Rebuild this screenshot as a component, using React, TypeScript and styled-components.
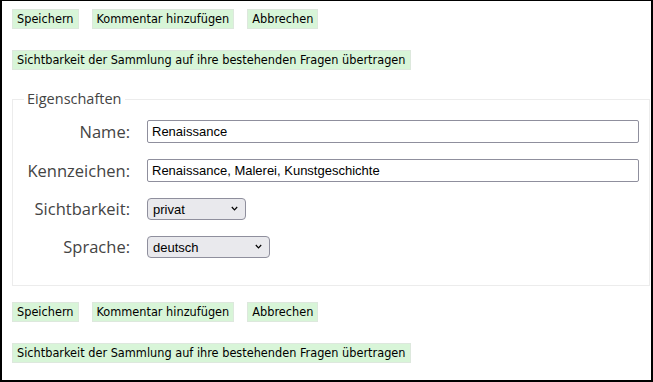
import React from "react";
import styled, { createGlobalStyle } from "styled-components";

const Global = createGlobalStyle`
  html, body { margin: 0; padding: 0; background: #fff; }
  #root { width: 653px; height: 382px; }
`;

const Page = styled.div`
  box-sizing: border-box;
  width: 653px;
  height: 382px;
  border-style: solid;
  border-color: #000;
  border-width: 1px 2px 2px 2px;
  padding: 8px 1px 0 10px;
  display: flex;
  flex-direction: column;
`;

const ButtonRow = styled.div<{ $top?: number }>`
  display: flex;
  gap: 13px;
  margin-top: ${(p) => p.$top ?? 0}px;
`;

const ActionButton = styled.button`
  box-sizing: border-box;
  height: 20px;
  padding: 0 4px;
  border: 1px solid #dde8dd;
  background: #d8f5d8;
  color: #000;
  font-family: "DejaVu Sans Condensed", "DejaVu Sans", sans-serif;
  font-size: 12.6px;
  line-height: 18px;
  cursor: pointer;
  white-space: nowrap;
`;

const Fieldset = styled.fieldset`
  margin: 20px 0 0 0;
  padding: 12px 10px 27px 0;
  border: 1px solid #ececec;
  min-width: 0;
`;

const Legend = styled.legend`
  margin-left: 11px;
  padding: 0 3px;
  font-family: "Open Sans", "Noto Sans", sans-serif;
  font-size: 14.5px;
  line-height: 18px;
  color: #444;
`;

const FormGrid = styled.div`
  display: grid;
  grid-template-columns: 117px 1fr;
  column-gap: 17px;
  row-gap: 16px;
  align-items: center;
`;

const Label = styled.label`
  text-align: right;
  font-family: "Open Sans", "Noto Sans", sans-serif;
  font-size: 16.5px;
  color: #444;
  line-height: 22px;
`;

const TextInput = styled.input`
  box-sizing: border-box;
  width: 492px;
  height: 23px;
  border: 1px solid #8f8f9d;
  border-radius: 2px;
  padding: 0 4px;
  font-family: "Liberation Sans", Arial, sans-serif;
  font-size: 13px;
  color: #000;
  background: #fff;
`;

const SelectWrap = styled.div<{ $w: number }>`
  position: relative;
  width: ${(p) => p.$w}px;
  height: 22px;
`;

const Select = styled.select`
  appearance: none;
  box-sizing: border-box;
  width: 100%;
  height: 22px;
  border: 1px solid #8f8f9d;
  border-radius: 4px;
  background: #e9e9ed;
  padding: 0 20px 0 5px;
  font-family: "Liberation Sans", Arial, sans-serif;
  font-size: 13px;
  color: #000;
`;

const Chevron = styled.svg`
  position: absolute;
  right: 8px;
  top: 8px;
  width: 7px;
  height: 5px;
  pointer-events: none;
`;

const Spacer = styled.div<{ $h: number }>`
  height: ${(p) => p.$h}px;
`;

function Buttons() {
  return (
    <>
      <ButtonRow>
        <ActionButton>Speichern</ActionButton>
        <ActionButton>Kommentar hinzufügen</ActionButton>
        <ActionButton>Abbrechen</ActionButton>
      </ButtonRow>
      <ButtonRow $top={21}>
        <ActionButton>Sichtbarkeit der Sammlung auf ihre bestehenden Fragen übertragen</ActionButton>
      </ButtonRow>
    </>
  );
}

function DropDown({ width, value, options }: { width: number; value: string; options: string[] }) {
  return (
    <SelectWrap $w={width}>
      <Select defaultValue={value}>
        {options.map((o) => (
          <option key={o} value={o}>
            {o}
          </option>
        ))}
      </Select>
      <Chevron viewBox="0 0 7 5">
        <path d="M0.8 1 L3.5 3.8 L6.2 1" fill="none" stroke="#000" strokeWidth="1.2" />
      </Chevron>
    </SelectWrap>
  );
}

export default function App() {
  return (
    <>
      <Global />
      <Page>
        <Buttons />
        <Fieldset>
          <Legend>Eigenschaften</Legend>
          <FormGrid>
            <Label>Name:</Label>
            <TextInput defaultValue="Renaissance" />
            <Label>Kennzeichen:</Label>
            <TextInput defaultValue="Renaissance, Malerei, Kunstgeschichte" />
            <Label>Sichtbarkeit:</Label>
            <DropDown width={99} value="privat" options={["privat", "öffentlich"]} />
            <Label>Sprache:</Label>
            <DropDown width={123} value="deutsch" options={["deutsch", "englisch"]} />
          </FormGrid>
        </Fieldset>
        <Spacer $h={16} />
        <Buttons />
      </Page>
    </>
  );
}
